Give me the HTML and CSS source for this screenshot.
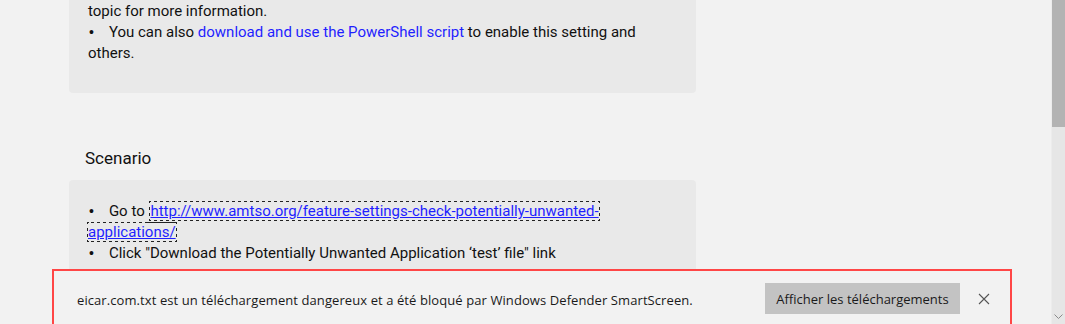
FILE: index.html
```html
<!DOCTYPE html>
<html lang="en">
<head>
<meta charset="utf-8">
<title>Scenario</title>
<link rel="stylesheet" href="styles.css">
</head>
<body>
<div class="window">
  <main class="page">
    <section class="card card-top">
      <p class="line">topic for more information.</p>
      <p class="line"><span class="bullet">•</span>You can also <a class="plain-link" href="#">download and use the PowerShell script</a> to enable this setting and others.</p>
    </section>
    <h2 class="heading">Scenario</h2>
    <section class="card card-scenario">
      <p class="line"><span class="bullet">•</span>Go to <a class="focus-link" href="#">http://www.amtso.org/feature-settings-check-potentially-unwanted-applications/</a></p>
      <p class="line"><span class="bullet">•</span>Click "Download the Potentially Unwanted Application ‘test’ file" link</p>
    </section>
  </main>
  <div class="scrollbar">
    <div class="thumb"></div>
    <div class="track"></div>
    <svg class="arrow" width="9" height="5" viewBox="0 0 9 5"><path d="M0.5 0.5 L4.5 4.5 L8.5 0.5" fill="none" stroke="#8a8a8a" stroke-width="1"/></svg>
  </div>
</div>
<div class="download-bar">
  <div class="download-frame">
    <span class="message">eicar.com.txt est un téléchargement dangereux et a été bloqué par Windows Defender SmartScreen.</span>
    <button class="show-btn">Afficher les téléchargements</button>
    <svg class="close" width="12" height="12" viewBox="0 0 12 12"><path d="M1 1 L11 11 M11 1 L1 11" stroke="#555" stroke-width="1.1" fill="none"/></svg>
  </div>
</div>
</body>
</html>
```
FILE: styles.css
```css
html, body {
  margin: 0;
  padding: 0;
  height: 100%;
  overflow: hidden;
  background: #f2f2f2;
}
.window {
  display: flex;
  height: 324px;
}
.page {
  flex: 1;
  padding-left: 69px;
  font-family: Roboto, "Liberation Sans", sans-serif;
  color: #111;
}
.card {
  width: 627px;
  box-sizing: border-box;
  background: #e9e9e9;
  border-radius: 4px;
  padding: 0 19px;
  font-size: 15px;
  line-height: 21px;
}
.card-top {
  border-radius: 0 0 4px 4px;
  padding-top: 1px;
  padding-bottom: 29px;
}
.card-scenario {
  padding-top: 21px;
  padding-bottom: 20px;
}
.line {
  margin: 0;
}
.bullet {
  margin-left: 1px;
  margin-right: 15px;
  font-family: "Liberation Sans", sans-serif;
  font-size: 14px;
}
.plain-link {
  color: #1f1fff;
  text-decoration: none;
}
.focus-link {
  margin-left: 2px;
  color: #1f1fff;
  text-decoration: underline;
  outline: 1px dotted #222;
}
.heading {
  margin: 55px 0 11px 16px;
  font-weight: normal;
  font-size: 17px;
  line-height: 21px;
  color: #111;
}
.scrollbar {
  width: 13px;
  display: flex;
  flex-direction: column;
  position: relative;
  border-left: 1px solid #ececec;
}
.thumb {
  height: 127px;
  background: #b3b3b3;
}
.track {
  flex: 1;
  background: #e6e6e6;
}
.arrow {
  position: absolute;
  left: 2px;
  bottom: 5px;
}
.download-bar {
  position: fixed;
  left: 0;
  right: 14px;
  top: 269px;
  bottom: 0;
  background: #f2f2f2;
}
.download-frame {
  margin-left: 52px;
  width: 960px;
  height: 70px;
  box-sizing: border-box;
  border: 2px solid #ff4646;
  display: flex;
  align-items: flex-start;
  padding: 12px 0 0 23px;
  font-family: "Open Sans", "Noto Sans", sans-serif;
  font-size: 13px;
  color: #1a1a1a;
}
.message {
  margin-top: 8px;
  line-height: 18px;
  letter-spacing: 0.085px;
}
.show-btn {
  margin-left: auto;
  width: 195px;
  height: 31px;
  border: none;
  background: #c3c3c3;
  font-family: "Open Sans", "Noto Sans", sans-serif;
  font-size: 13px;
  color: #1a1a1a;
  padding: 0;
}
.close {
  margin: 10px 20px 0 18px;
}
```
